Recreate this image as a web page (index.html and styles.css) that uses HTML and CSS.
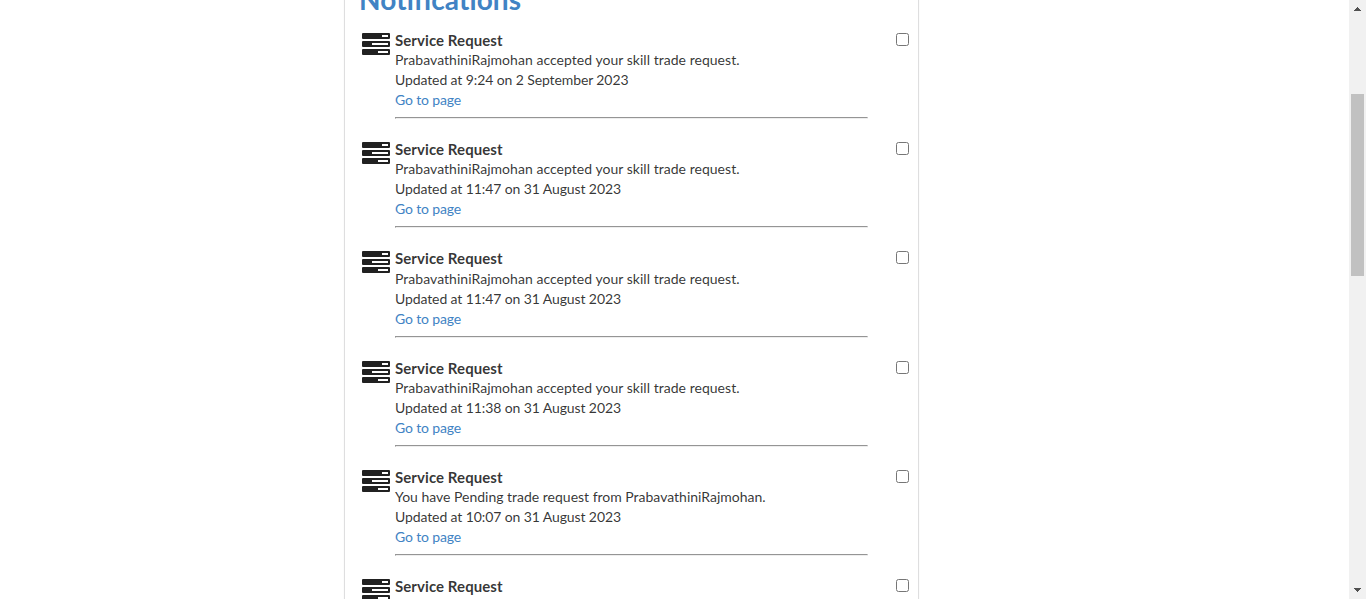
FILE: index.html
```
<!DOCTYPE html>
<html lang="en">
<head>
<meta charset="utf-8">
<title>Notifications</title>
<link rel="stylesheet" href="styles.css">
</head>
<body>
<svg class="defs" aria-hidden="true">
  <symbol id="tasks" viewBox="0 0 28 22">
    <path fill-rule="evenodd" d="M1 0h26q1 0 1 1v4q0 1-1 1H1Q0 6 0 5V1Q0 0 1 0zM20 2v2h6V2zM1 8h26q1 0 1 1v4q0 1-1 1H1q-1 0-1-1V9q0-1 1-1zM10 10v2h16v-2zM1 16h26q1 0 1 1v4q0 1-1 1H1q-1 0-1-1v-4q0-1 1-1zM16 18v2h10v-2z"/>
  </symbol>
</svg>
<div class="page">
  <main class="viewport">
    <section class="panel">
      <h1 class="heading">Notifications</h1>
      <div class="list">
        <article class="item">
          <svg class="icon"><use href="#tasks"/></svg>
          <div class="content"><div class="title">Service Request</div><div class="message">PrabavathiniRajmohan accepted your skill trade request.</div><div class="date">Updated at 9:24 on 2 September 2023</div><a class="link">Go to page</a><hr class="rule"></div>
          <input class="check" type="checkbox">
        </article>
        <article class="item">
          <svg class="icon"><use href="#tasks"/></svg>
          <div class="content"><div class="title">Service Request</div><div class="message">PrabavathiniRajmohan accepted your skill trade request.</div><div class="date">Updated at 11:47 on 31 August 2023</div><a class="link">Go to page</a><hr class="rule"></div>
          <input class="check" type="checkbox">
        </article>
        <article class="item">
          <svg class="icon"><use href="#tasks"/></svg>
          <div class="content"><div class="title">Service Request</div><div class="message">PrabavathiniRajmohan accepted your skill trade request.</div><div class="date">Updated at 11:47 on 31 August 2023</div><a class="link">Go to page</a><hr class="rule"></div>
          <input class="check" type="checkbox">
        </article>
        <article class="item">
          <svg class="icon"><use href="#tasks"/></svg>
          <div class="content"><div class="title">Service Request</div><div class="message">PrabavathiniRajmohan accepted your skill trade request.</div><div class="date">Updated at 11:38 on 31 August 2023</div><a class="link">Go to page</a><hr class="rule"></div>
          <input class="check" type="checkbox">
        </article>
        <article class="item">
          <svg class="icon"><use href="#tasks"/></svg>
          <div class="content"><div class="title">Service Request</div><div class="message pending">You have Pending trade request from PrabavathiniRajmohan.</div><div class="date">Updated at 10:07 on 31 August 2023</div><a class="link">Go to page</a><hr class="rule"></div>
          <input class="check" type="checkbox">
        </article>
        <article class="item">
          <svg class="icon"><use href="#tasks"/></svg>
          <div class="content"><div class="title">Service Request</div></div>
          <input class="check" type="checkbox">
        </article>
      </div>
    </section>
  </main>
  <aside class="scrollbar">
    <svg class="arrow" viewBox="0 0 7 4" shape-rendering="crispEdges"><path d="M3 0h1v1h1v1h1v1h1v1H0V3h1V2h1V1h1z"/></svg>
    <div class="thumb"></div>
    <svg class="arrow" viewBox="0 0 7 4" shape-rendering="crispEdges"><path d="M0 0h7v1H6v1H5v1H4v1H3V3H2V2H1V1H0z"/></svg>
  </aside>
</div>
</body>
</html>
```
FILE: styles.css
```
* { box-sizing: border-box; }
body {
  margin: 0;
  overflow: hidden;
  background: #fff;
  color: rgba(0, 0, 0, .8);
  font: 14px/20px Lato, "Liberation Sans", sans-serif;
}
.defs { display: none; }
.page { display: flex; height: 599px; overflow: hidden; }
.viewport { flex: 1; display: flex; padding-left: 345px; height: 599px; overflow: hidden; }
.panel {
  width: 573px;
  height: 640px;
  padding-left: 14px;
  margin-top: -19px;
  box-shadow: 0 0 0 1px #dededf, 0 1px 2px 0 #d4d4d5;
}
.heading { margin: 0; height: 49px; font-size: 28px; line-height: 36px; font-weight: 700; letter-spacing: .1px; color: #4183c4; }
.list { display: flex; flex-direction: column; }
.item { display: flex; align-items: flex-start; height: 109.2px; padding-left: 3px; }
.icon { width: 28px; height: 22px; margin: 3px 5px 0 0; fill: #212121; flex: none; }
.content { width: 473px; white-space: nowrap; }
.title { font-size: 15px; font-weight: 700; line-height: 20.15px; letter-spacing: .07px; }
.message { letter-spacing: .035px; }
.pending { letter-spacing: -.01px; }
.date { letter-spacing: -.105px; }
.link { display: block; letter-spacing: -.16px; color: #4183c4; }
.rule { height: 2px; margin: 7px 0 0; border: 1px solid; border-color: #959595 #eee #eee #959595; }
.check { width: 13px; height: 13px; margin: 3px 0 0 28px; }
.scrollbar {
  width: 17px;
  display: flex;
  flex-direction: column;
  align-items: center;
  justify-content: space-between;
  padding: 7px 0;
  background: #f1f1f1;
}
.arrow { width: 7px; height: 4px; fill: #505050; }
.thumb { width: 13px; height: 182px; margin: 83px 0 auto; background: #c1c1c1; }
```
